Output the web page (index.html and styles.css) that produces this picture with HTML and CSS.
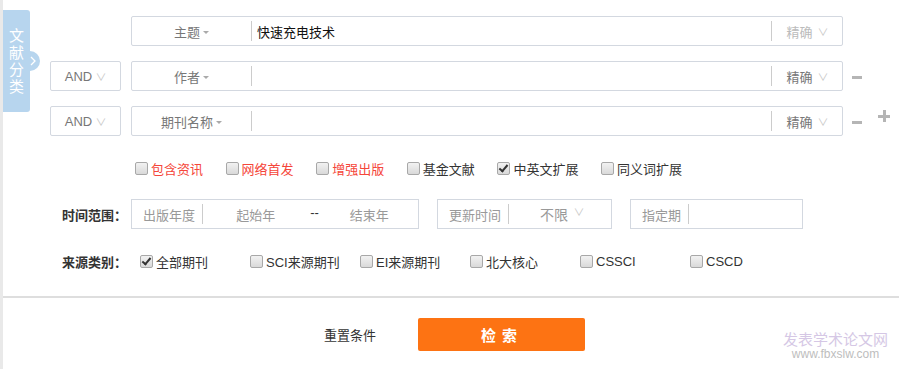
FILE: index.html
```html
<!DOCTYPE html>
<html lang="zh-CN">
<head>
    <meta charset="UTF-8">
    <title>高级检索</title>
    <link rel="stylesheet" href="styles.css">
</head>
<body>
    <div class="page">
        <div class="side-tab">
            <span>文</span><span>献</span><span>分</span><span>类</span>
            <div class="side-knob">
                <svg width="8" height="10" viewBox="0 0 8 10"><path d="M2 1 L6 5 L2 9" fill="none" stroke="#fff" stroke-width="1.3"/></svg>
            </div>
        </div>

        <div class="search-rows">
            <div class="row">
                <div class="logic empty"></div>
                <div class="field-box">
                    <div class="field-name">主题 <i class="caret"></i></div>
                    <div class="field-input">快速充电技术</div>
                    <div class="match light">精确 <i class="chev">∨</i></div>
                </div>
            </div>
            <div class="row">
                <div class="logic">AND <i class="chev">∨</i></div>
                <div class="field-box">
                    <div class="field-name">作者 <i class="caret"></i></div>
                    <div class="field-input"></div>
                    <div class="match">精确 <i class="chev">∨</i></div>
                </div>
                <div class="ops"><span class="minus"></span></div>
            </div>
            <div class="row">
                <div class="logic">AND <i class="chev">∨</i></div>
                <div class="field-box">
                    <div class="field-name">期刊名称 <i class="caret"></i></div>
                    <div class="field-input"></div>
                    <div class="match">精确 <i class="chev">∨</i></div>
                </div>
                <div class="ops"><span class="minus"></span><span class="plus"></span></div>
            </div>
        </div>

        <div class="options">
            <label class="chk red"><span class="box"></span>包含资讯</label>
            <label class="chk red"><span class="box"></span>网络首发</label>
            <label class="chk red"><span class="box"></span>增强出版</label>
            <label class="chk"><span class="box"></span>基金文献</label>
            <label class="chk"><span class="box checked"></span>中英文扩展</label>
            <label class="chk"><span class="box"></span>同义词扩展</label>
        </div>

        <div class="line-row time-row">
            <div class="line-label">时间范围：</div>
            <div class="range-box publish">
                <div class="range-name">出版年度</div>
                <div class="range-from">起始年</div>
                <div class="range-sep">--</div>
                <div class="range-to">结束年</div>
            </div>
            <div class="range-box update">
                <div class="range-name">更新时间</div>
                <div class="range-sel">不限 <i class="chev">∨</i></div>
            </div>
            <div class="range-box issue">
                <div class="range-name">指定期</div>
                <div class="range-fill"></div>
            </div>
        </div>

        <div class="line-row source-row">
            <div class="line-label">来源类别：</div>
            <div class="sources">
                <label class="chk"><span class="box checked"></span>全部期刊</label>
                <label class="chk"><span class="box"></span>SCI来源期刊</label>
                <label class="chk"><span class="box"></span>EI来源期刊</label>
                <label class="chk"><span class="box"></span>北大核心</label>
                <label class="chk"><span class="box"></span>CSSCI</label>
                <label class="chk"><span class="box"></span>CSCD</label>
            </div>
        </div>

        <div class="actions">
            <a class="reset">重置条件</a>
            <button class="search-btn">检 索</button>
            <div class="watermark">
                <div class="wm-title">发表学术论文网</div>
                <div class="wm-url">www.fbxslw.com</div>
            </div>
        </div>
    </div>
</body>
</html>
```

FILE: styles.css
```css
body {
    margin: 0;
    font-family: "Liberation Sans", Arial, "Noto Sans CJK SC", sans-serif;
    font-size: 13px;
    color: #333;
    background: #fff;
}
.page {
    position: relative;
    height: 369px;
    border-left: 3px solid #e9e9e9;
    box-sizing: border-box;
    overflow: hidden;
}
i {
    font-style: normal;
}

/* side tab */
.side-tab {
    position: absolute;
    left: 0;
    top: 10px;
    width: 27px;
    height: 102px;
    background: #b7d5ee;
    border-radius: 0 3px 3px 0;
    color: #fff;
    font-size: 15px;
    display: flex;
    flex-direction: column;
    align-items: center;
    padding-top: 17px;
    box-sizing: border-box;
    line-height: 17px;
}
.side-knob {
    position: absolute;
    left: 23px;
    top: 41px;
    width: 14px;
    height: 20px;
    background: #b7d5ee;
    border-radius: 0 10px 10px 0;
    display: flex;
    align-items: center;
    justify-content: center;
}

/* search rows */
.search-rows {
    padding: 16px 0 0 47px;
    display: flex;
    flex-direction: column;
    gap: 15px;
}
.row {
    display: flex;
    align-items: center;
    height: 30px;
}
.logic {
    width: 71px;
    height: 30px;
    box-sizing: border-box;
    border: 1px solid #d3d8e0;
    border-radius: 2px;
    margin-right: 10px;
    display: flex;
    align-items: center;
    justify-content: center;
    color: #777;
    gap: 4px;
}
.logic.empty {
    border-color: transparent;
}
.chev {
    color: #c8c8c8;
    font-size: 10px;
    transform: scaleX(1.1);
}
.field-box {
    width: 712px;
    height: 30px;
    box-sizing: border-box;
    border: 1px solid #d3d8e0;
    border-radius: 2px;
    display: flex;
    align-items: center;
}
.field-name {
    width: 119px;
    height: 20px;
    border-right: 1px solid #ccc;
    display: flex;
    align-items: center;
    justify-content: center;
    color: #777;
    gap: 3px;
}
.caret {
    width: 0;
    height: 0;
    border-left: 3px solid transparent;
    border-right: 3px solid transparent;
    border-top: 3px solid #aaa;
    margin-top: 2px;
}
.field-input {
    flex: 1;
    padding-left: 5px;
    color: #111;
}
.match {
    width: 70px;
    height: 20px;
    border-left: 1px solid #ccc;
    display: flex;
    align-items: center;
    justify-content: center;
    gap: 5px;
    color: #777;
}
.match.light {
    color: #bbb;
}
.ops {
    display: flex;
    align-items: center;
    gap: 16px;
    margin-left: 9px;
}
.minus {
    width: 10px;
    height: 3px;
    background: #b5b5b5;
    margin-top: 3px;
}
.plus {
    position: relative;
    width: 12px;
    height: 12px;
    margin-top: -10px;
}
.plus::before,
.plus::after {
    content: "";
    position: absolute;
    background: #b5b5b5;
}
.plus::before {
    left: 0;
    top: 5px;
    width: 12px;
    height: 3px;
}
.plus::after {
    left: 5px;
    top: 0;
    width: 3px;
    height: 12px;
}

/* checkboxes */
.chk {
    display: flex;
    align-items: center;
    gap: 3px;
    color: #333;
    white-space: nowrap;
}
.chk.red {
    color: #f5463a;
}
.box {
    width: 11px;
    height: 11px;
    border: 1px solid #a8a8a8;
    border-radius: 2px;
    background: linear-gradient(#f2f2f2, #d9d9d9);
    position: relative;
}
.box.checked::after {
    content: "";
    position: absolute;
    left: 3px;
    top: 0;
    width: 3px;
    height: 7px;
    border: solid #333;
    border-width: 0 2px 2px 0;
    transform: rotate(40deg);
}
.options {
    display: flex;
    gap: 22.6px;
    padding: 24px 0 0 132px;
    height: 16px;
}

/* time / source rows */
.line-row {
    display: flex;
    align-items: center;
}
.line-label {
    width: 69px;
    padding-left: 59px;
    font-weight: bold;
    color: #333;
}
.time-row {
    margin-top: 23px;
}
.range-box {
    height: 30px;
    box-sizing: border-box;
    border: 1px solid #d3d8e0;
    display: flex;
    align-items: center;
    color: #999;
    margin-right: 18px;
    white-space: nowrap;
}
.range-box.publish {
    width: 288px;
}
.range-name {
    flex-shrink: 0;
    height: 20px;
    display: flex;
    align-items: center;
    padding: 0 7px 0 11px;
    border-right: 1px solid #ccc;
}
.range-from {
    width: 106px;
    text-align: center;
}
.range-sep {
    color: #333;
    width: 12px;
    text-align: center;
    margin-top: -4px;
}
.range-to {
    width: 98px;
    text-align: center;
}
.range-box.update {
    width: 175px;
}
.range-sel {
    flex: 1;
    display: flex;
    justify-content: center;
    gap: 6px;
    color: #999;
    font-size: 14px;
    padding-left: 4px;
}
.range-box.issue {
    width: 173px;
}
.range-fill {
    flex: 1;
}
.source-row {
    margin-top: 23px;
}
.sources {
    display: flex;
    padding-left: 9px;
}
.sources .chk {
    width: 110px;
    font-size: 13px;
}

/* actions */
.actions {
    margin-top: 25px;
    border-top: 2px solid #dedede;
    display: flex;
    align-items: center;
    height: 72px;
    padding-left: 321px;
    position: relative;
}
.reset {
    color: #333;
    font-size: 13px;
    margin-right: 42px;
    cursor: pointer;
}
.search-btn {
    width: 167px;
    height: 33px;
    border: none;
    border-radius: 2px;
    background: #fd7313;
    color: #fff;
    font-weight: bold;
    font-size: 15px;
    letter-spacing: 1px;
    padding-left: 2px;
    font-family: inherit;
    cursor: pointer;
}
.watermark {
    position: absolute;
    right: 11px;
    top: 34px;
    text-align: center;
    opacity: 0.55;
}
.wm-title {
    font-size: 15px;
    color: #b49bd0;
    line-height: 16px;
}
.wm-url {
    font-size: 12px;
    color: #888;
    line-height: 13px;
}
```
